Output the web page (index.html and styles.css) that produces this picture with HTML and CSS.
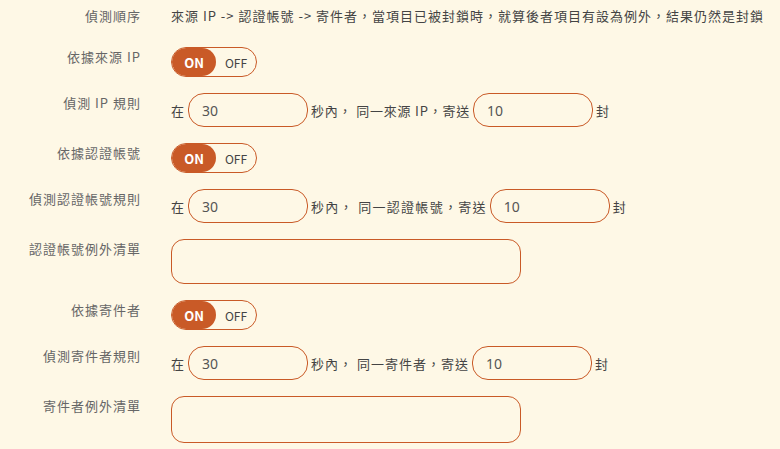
FILE: index.html
```html
<!DOCTYPE html>
<html lang="zh-Hant">
<head>
<meta charset="utf-8">
<link rel="stylesheet" href="styles.css">
</head>
<body>
<div class="form">
  <div class="row row-first">
    <div class="label">偵測順序</div>
    <div class="field text">來源 IP -&gt; 認證帳號 -&gt; 寄件者，當項目已被封鎖時，就算後者項目有設為例外，結果仍然是封鎖</div>
  </div>
  <div class="row">
    <div class="label">依據來源 IP</div>
    <div class="field"><div class="toggle"><span class="on">ON</span><span class="off">OFF</span></div></div>
  </div>
  <div class="row">
    <div class="label">偵測 IP 規則</div>
    <div class="field rule"><span>在</span><input class="input" value="30"><span class="mid mid-tight">秒內， 同一來源 IP，寄送</span><input class="input" value="10"><span>封</span></div>
  </div>
  <div class="row">
    <div class="label">依據認證帳號</div>
    <div class="field"><div class="toggle"><span class="on">ON</span><span class="off">OFF</span></div></div>
  </div>
  <div class="row">
    <div class="label">偵測認證帳號規則</div>
    <div class="field rule"><span>在</span><input class="input" value="30"><span class="mid mid-wide">秒內， 同一認證帳號，寄送</span><input class="input" value="10"><span>封</span></div>
  </div>
  <div class="row">
    <div class="label">認證帳號例外清單</div>
    <div class="field"><textarea class="area"></textarea></div>
  </div>
  <div class="row">
    <div class="label">依據寄件者</div>
    <div class="field"><div class="toggle"><span class="on">ON</span><span class="off">OFF</span></div></div>
  </div>
  <div class="row">
    <div class="label">偵測寄件者規則</div>
    <div class="field rule"><span>在</span><input class="input" value="30"><span class="mid mid-med">秒內， 同一寄件者，寄送</span><input class="input" value="10"><span>封</span></div>
  </div>
  <div class="row">
    <div class="label">寄件者例外清單</div>
    <div class="field"><textarea class="area area-tall"></textarea></div>
  </div>
</div>
</body>
</html>
```

FILE: styles.css
```css
html, body {
  margin: 0;
  padding: 0;
  background: #fef8e6;
}
body {
  font-family: "Noto Sans CJK TC", "Noto Sans", sans-serif;
  font-size: 13px;
  letter-spacing: 1px;
  color: #444;
  overflow: hidden;
}
.form {
  display: flex;
  flex-direction: column;
  gap: 16px;
  padding-top: 6px;
}
.row {
  display: grid;
  grid-template-columns: 141px 1fr;
  column-gap: 30px;
  align-items: start;
}
.row-first {
  margin-bottom: 5px;
}
.label {
  text-align: right;
  color: #666;
  line-height: 20px;
  white-space: nowrap;
}
.field {
  display: flex;
  align-items: center;
  min-width: 0;
}
.text {
  line-height: 20px;
  white-space: nowrap;
}
.toggle {
  display: flex;
  align-items: stretch;
  width: 84px;
  height: 28px;
  border: 1px solid #c95a27;
  border-radius: 15px;
  overflow: hidden;
}
.on {
  width: 44px;
  background: #c95a27;
  color: #fff;
  font-weight: bold;
  border-radius: 15px;
  display: flex;
  align-items: center;
  justify-content: center;
  letter-spacing: 0;
}
.off {
  flex: 1;
  display: flex;
  align-items: center;
  justify-content: center;
  color: #444;
  letter-spacing: 0;
  font-size: 12px;
}
.rule {
  gap: 3px;
}
.mid {
  white-space: nowrap;
}
.mid-tight {
  letter-spacing: 0.8px;
}
.mid-wide {
  letter-spacing: 1.3px;
}
.mid-med {
  letter-spacing: 1px;
}
.input {
  box-sizing: border-box;
  width: 120px;
  height: 34px;
  border: 1px solid #c95a27;
  border-radius: 16px;
  background: transparent;
  padding: 0 13px;
  font-family: "Noto Sans", sans-serif;
  font-size: 14px;
  color: #555;
  outline: none;
  margin: 0;
}
.area {
  box-sizing: border-box;
  width: 350px;
  height: 45px;
  border: 1px solid #c95a27;
  border-radius: 13px;
  background: transparent;
  resize: none;
  outline: none;
  margin: 0;
  display: block;
}
.area-tall {
  height: 47px;
}
```
